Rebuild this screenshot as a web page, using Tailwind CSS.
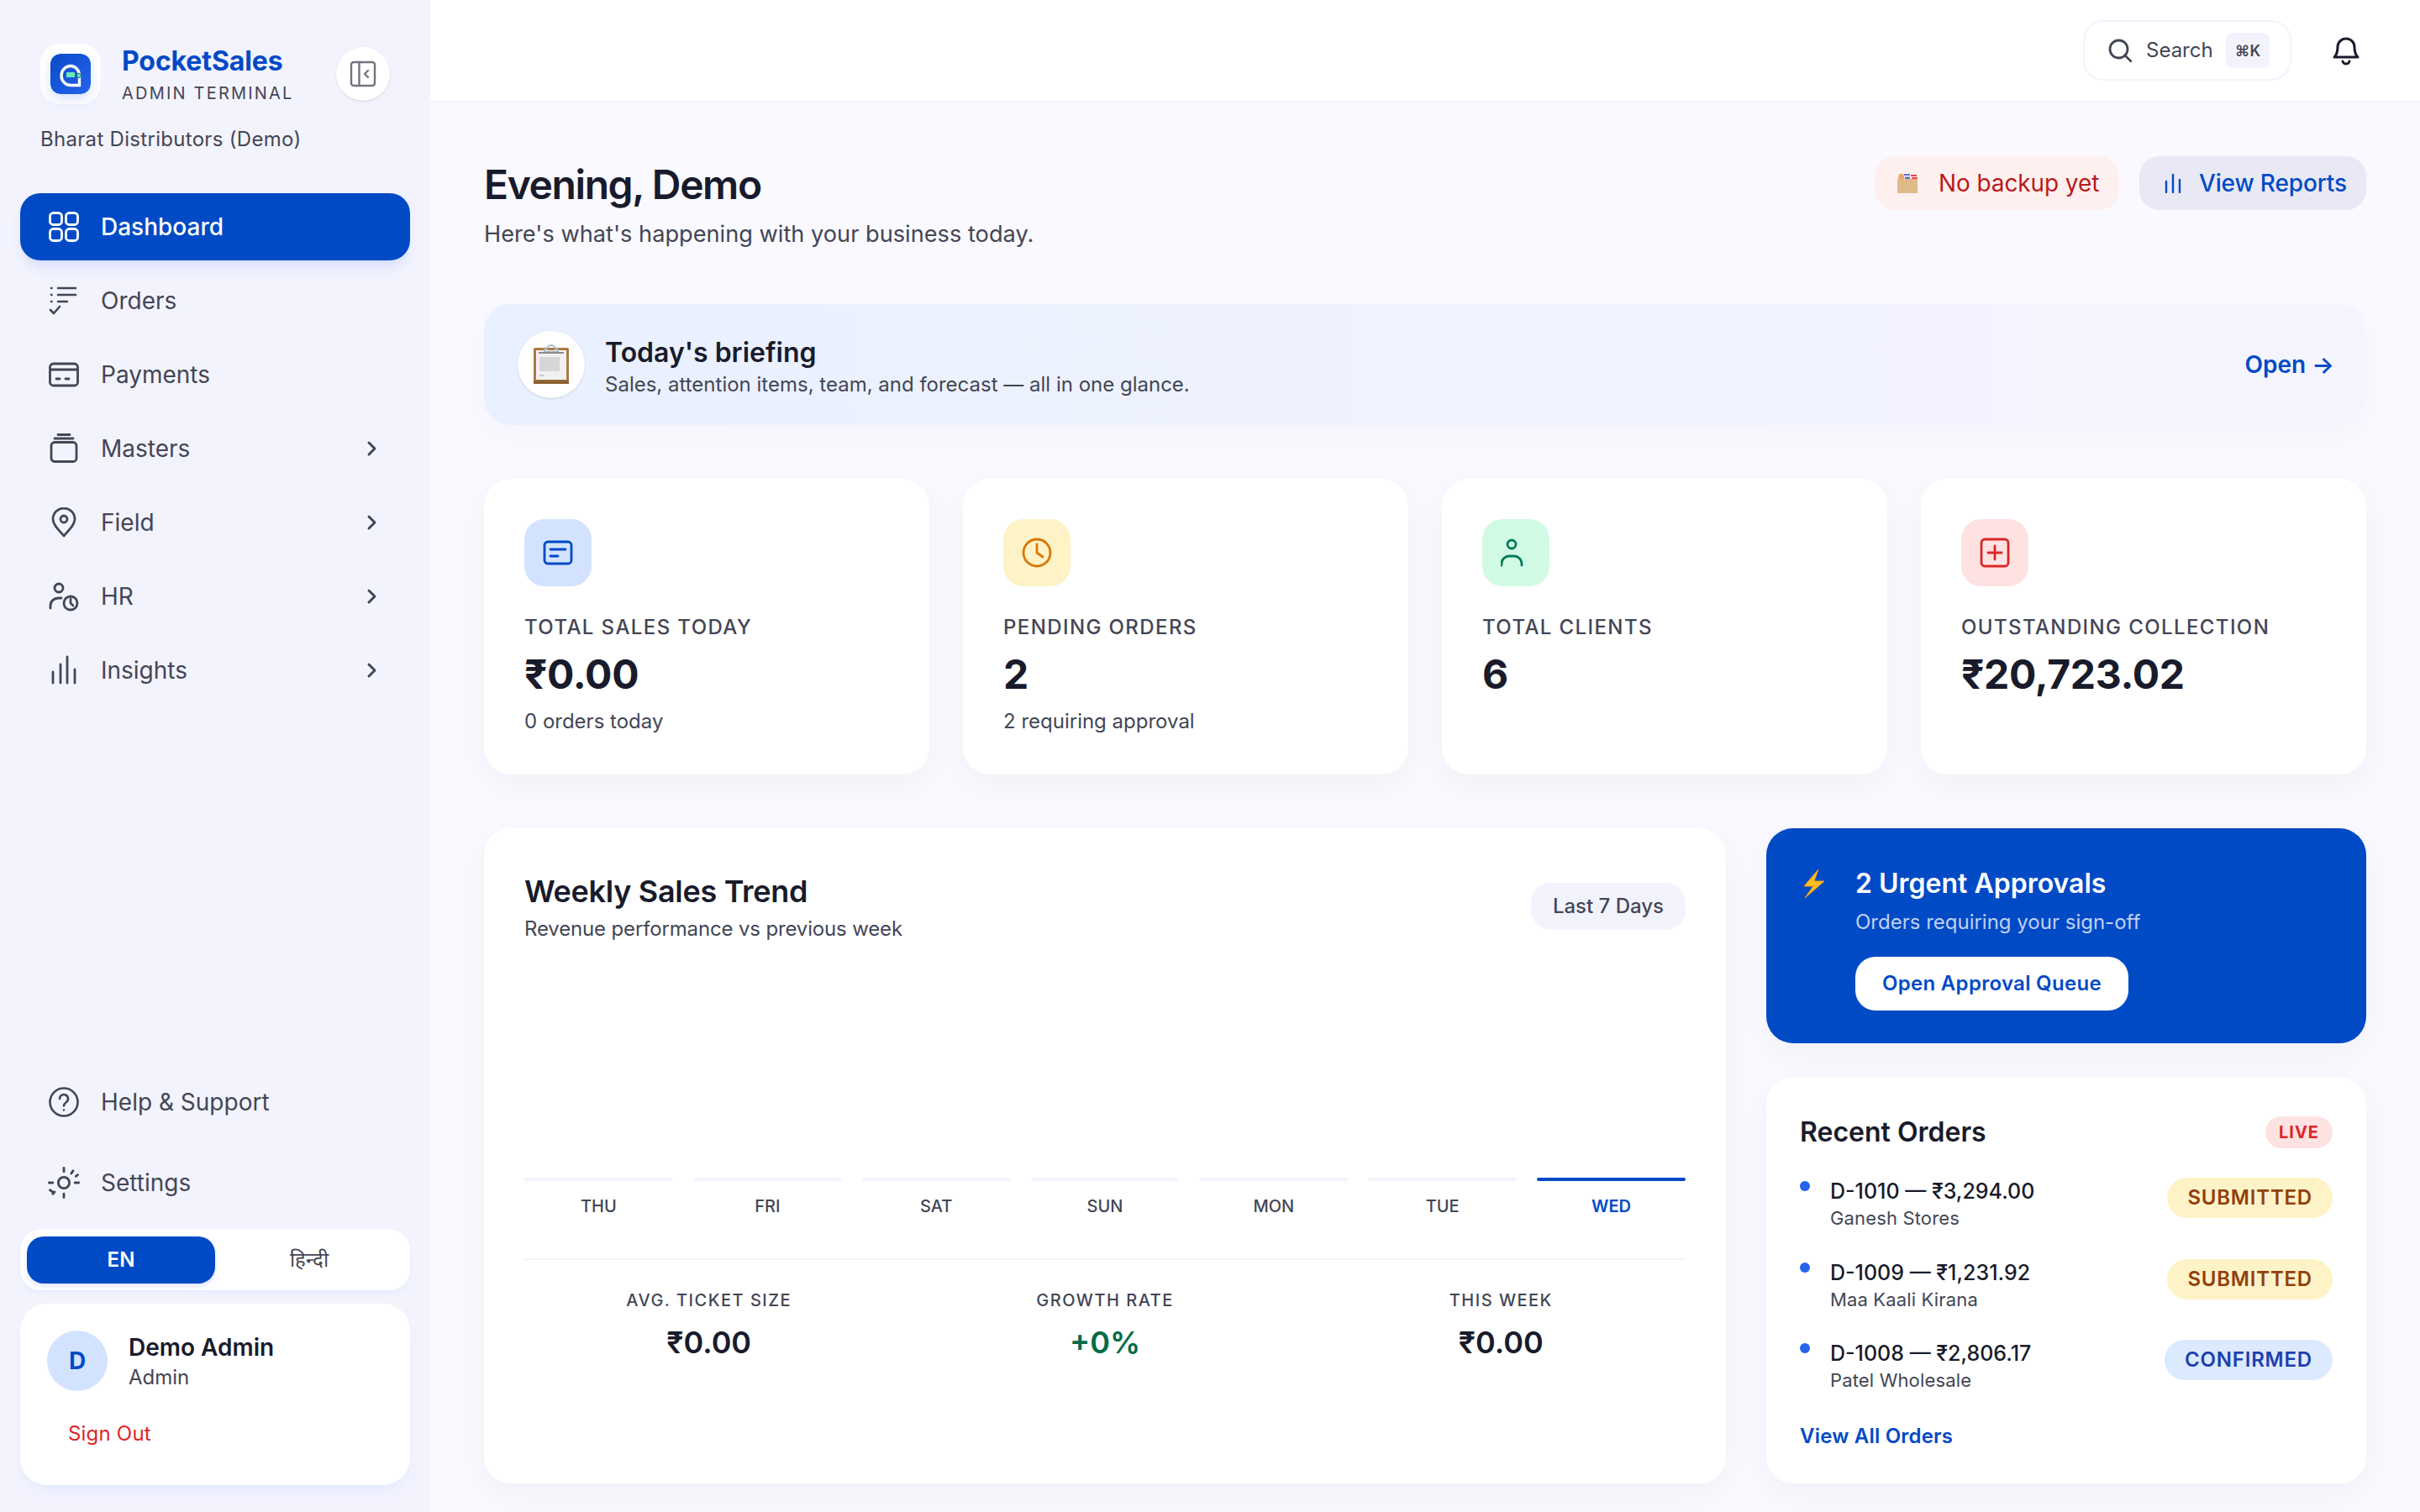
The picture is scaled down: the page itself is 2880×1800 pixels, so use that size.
<!DOCTYPE html>
<html lang="en">
<head>
    <meta charset="UTF-8">
    <meta name="viewport" content="width=device-width, initial-scale=1.0">
    <title>PocketSales</title>
    <script src="https://cdn.jsdelivr.net/npm/@tailwindcss/browser@4"></script>
</head>
<body class="h-screen overflow-hidden flex bg-[#f9f9ff] text-[#191b2b] font-['Inter','Noto_Sans_CJK_SC',sans-serif]">

    <!-- sidebar -->
    <aside class="w-[512px] shrink-0 h-full bg-[#f3f3fe] flex flex-col px-6 pb-8">
        <div class="flex items-center pt-[52px] pl-6 pr-6">
            <div class="w-[72px] h-[72px] rounded-3xl bg-white flex items-center justify-center shrink-0">
                <svg class="w-12 h-12 rounded-xl shadow-[0_6px_14px_rgba(37,99,235,0.18)]" viewBox="0 0 48 48">
                    <defs><linearGradient id="tile" x1="0" y1="0" x2="1" y2="1"><stop offset="0" stop-color="#0a4bc9"/><stop offset="1" stop-color="#2563eb"/></linearGradient></defs>
                    <rect width="48" height="48" rx="12" fill="url(#tile)"/>
                    <path d="M34.500 37.500H24a11 11.500 0 0 1 0-23a10.500 11.500 0 0 1 10.500 11.500z" fill="none" stroke="#fff" stroke-width="3.400"/>
                    <rect x="19" y="22" width="10" height="6" rx="1" fill="#6ee7b7"/>
                    <circle cx="34" cy="26" r="2.600" fill="#6ee7b7" stroke="#0f766e" stroke-width="1"/>
                </svg>
            </div>
            <div class="ml-[25px] flex-1 -my-px">
                <div class="text-[32px] leading-[44px] font-bold tracking-[-0.1px] text-[#004ac6]">PocketSales</div>
                <div class="text-[20px] leading-[28px] tracking-[2.2px] text-[#434655] mt-[2px]">ADMIN TERMINAL</div>
            </div>
            <button class="w-16 h-16 rounded-full bg-white shadow-sm flex items-center justify-center shrink-0">
                <svg class="w-8 h-8" viewBox="0 0 32 32" fill="none" stroke="#71747f" stroke-width="2.400" stroke-linecap="round" stroke-linejoin="round"><rect x="2" y="2" width="28" height="28" rx="3"/><path d="M11.500 2v28M22 12l-4 4 4 4"/></svg>
            </button>
        </div>
        <div class="pl-6 mt-[24px] text-[24px] leading-9 tracking-[0.3px] text-[#434655]">Bharat Distributors (Demo)</div>

        <nav class="mt-[46px] flex flex-col gap-2">
            <a class="h-20 rounded-3xl bg-[#004ac6] shadow-lg shadow-indigo-200/60 flex items-center pl-[34px] pr-[34px] text-white text-[28px] font-medium">
                <svg class="w-9 h-9 mr-[26px]" viewBox="0 0 36 36" fill="none" stroke="currentColor" stroke-width="2.800"><rect x="1.500" y="1.500" width="14" height="14" rx="4"/><rect x="20.500" y="1.500" width="14" height="14" rx="4"/><rect x="1.500" y="20.500" width="14" height="14" rx="4"/><rect x="20.500" y="20.500" width="14" height="14" rx="4"/></svg>
                Dashboard
            </a>
            <a class="h-20 flex items-center pl-[34px] pr-[34px] text-[#434655] text-[28px]">
                <svg class="w-9 h-9 mr-[26px]" viewBox="0 0 36 36" fill="none" stroke="currentColor" stroke-width="2.600" stroke-linecap="round" stroke-linejoin="round"><path d="M11 3h21M11 11h21M11 19h11M3 3h.5M3 11h.5M3 19h.5M2 29l4 4 7-8"/></svg>
                Orders
            </a>
            <a class="h-20 flex items-center pl-[34px] pr-[34px] text-[#434655] text-[28px]">
                <svg class="w-9 h-9 mr-[26px]" viewBox="0 0 36 36" fill="none" stroke="currentColor" stroke-width="2.800" stroke-linecap="round"><rect x="1.500" y="5" width="33" height="26" rx="4"/><path d="M2 12h32M9 23h4M20 23h4"/></svg>
                Payments
            </a>
            <a class="h-20 flex items-center pl-[34px] pr-[34px] text-[#434655] text-[28px]">
                <svg class="w-9 h-9 mr-[26px]" viewBox="0 0 36 36" fill="none" stroke="currentColor" stroke-width="2.800" stroke-linecap="round"><rect x="3" y="10.500" width="30" height="23" rx="4"/><path d="M7 6h22M11 1.500h14"/></svg>
                Masters
                <svg class="w-6 h-6 ml-auto" viewBox="0 0 24 24" fill="none" stroke="currentColor" stroke-width="3" stroke-linecap="round" stroke-linejoin="round"><path d="M9 5l7 7-7 7"/></svg>
            </a>
            <a class="h-20 flex items-center pl-[34px] pr-[34px] text-[#434655] text-[28px]">
                <svg class="w-9 h-9 mr-[26px]" viewBox="0 0 36 36" fill="none" stroke="currentColor" stroke-width="2.800" stroke-linejoin="round"><path d="M18 34C10 25 5 20 5 14a13 13 0 0 1 26 0c0 6-5 11-13 20z"/><circle cx="18" cy="14" r="4"/></svg>
                Field
                <svg class="w-6 h-6 ml-auto" viewBox="0 0 24 24" fill="none" stroke="currentColor" stroke-width="3" stroke-linecap="round" stroke-linejoin="round"><path d="M9 5l7 7-7 7"/></svg>
            </a>
            <a class="h-20 flex items-center pl-[34px] pr-[34px] text-[#434655] text-[28px]">
                <svg class="w-9 h-9 mr-[26px]" viewBox="0 0 36 36" fill="none" stroke="currentColor" stroke-width="2.800" stroke-linecap="round" stroke-linejoin="round"><circle cx="12" cy="8" r="5"/><path d="M2 32v-3c0-5 4-9 10-9h3"/><circle cx="26" cy="26" r="8"/><path d="M26 21v5l3 3"/></svg>
                HR
                <svg class="w-6 h-6 ml-auto" viewBox="0 0 24 24" fill="none" stroke="currentColor" stroke-width="3" stroke-linecap="round" stroke-linejoin="round"><path d="M9 5l7 7-7 7"/></svg>
            </a>
            <a class="h-20 flex items-center pl-[34px] pr-[34px] text-[#434655] text-[28px]">
                <svg class="w-9 h-9 mr-[26px]" viewBox="0 0 36 36" fill="none" stroke="currentColor" stroke-width="2.800" stroke-linecap="round"><path d="M5 20v13M14 11v22M22 2v31M31 17v16"/></svg>
                Insights
                <svg class="w-6 h-6 ml-auto" viewBox="0 0 24 24" fill="none" stroke="currentColor" stroke-width="3" stroke-linecap="round" stroke-linejoin="round"><path d="M9 5l7 7-7 7"/></svg>
            </a>
        </nav>

        <div class="mt-auto flex flex-col">
            <a class="h-20 flex items-center pl-[34px] pr-8 text-[#434655] text-[28px]">
                <svg class="w-9 h-9 mr-[26px]" viewBox="0 0 36 36" fill="none" stroke="currentColor" stroke-width="2.600" stroke-linecap="round"><circle cx="18" cy="18" r="16.500"/><path d="M13 14a5 5 0 1 1 8 4c-2 1.500-3 2.500-3 4.500M18 27.500v.01"/></svg>
                Help &amp; Support
            </a>
            <a class="h-20 mt-4 flex items-center pl-[34px] pr-8 text-[#434655] text-[28px]">
                <svg class="w-9 h-9 mr-[26px] scale-110" viewBox="0 0 36 36" fill="none" stroke="currentColor" stroke-width="2.600" stroke-linecap="round"><circle cx="18" cy="18" r="6"/><path d="M18 2v4M18 30v4M2 18h4M30 18h4M26 8l2-3M31 11l2-1.500M8 28l-2 2M3 26l3 2"/></svg>
                Settings
            </a>
            <div class="mt-4 h-[72px] rounded-3xl bg-white shadow-md shadow-indigo-100/60 p-2 grid grid-cols-2">
                <button class="rounded-[20px] bg-[#004ac6] text-white text-[24px] font-semibold shadow-md shadow-indigo-100">EN</button>
                <button class="text-[#434655] text-[24px]">हिन्दी</button>
            </div>
            <div class="mt-4 h-[216px] rounded-[32px] bg-white shadow-lg shadow-indigo-100/60 px-8 pt-8">
                <div class="flex items-center">
                    <div class="w-[72px] h-[72px] rounded-full bg-[#d3e3ff] flex items-center justify-center text-[#004ac6] text-[28px] font-bold">D</div>
                    <div class="ml-[25px]">
                        <div class="text-[28px] leading-10 font-semibold">Demo Admin</div>
                        <div class="text-[24px] leading-8 text-[#434655]">Admin</div>
                    </div>
                </div>
                <div class="mt-[33px] ml-[25px] text-[24px] leading-9 tracking-[0.2px] text-[#dc2626]">Sign Out</div>
            </div>
        </div>
    </aside>

    <div class="flex-1 min-w-0 flex flex-col">
        <!-- top bar -->
        <header class="h-[122px] shrink-0 bg-white border-b-2 border-[#f3f3fe] flex items-center justify-end pr-[72px]">
            <div class="h-[72px] w-[248px] rounded-3xl border-2 border-[#f3f3fe] flex items-center pl-7 pr-6">
                <svg class="w-7 h-7 text-[#434655]" viewBox="0 0 28 28" fill="none" stroke="currentColor" stroke-width="2.800" stroke-linecap="round"><circle cx="12.500" cy="12.500" r="10.500"/><path d="M20 20l7 7"/></svg>
                <span class="ml-[17px] text-[24px] text-[#434655]">Search</span>
                <span class="ml-auto w-[52px] h-[42px] rounded-lg bg-[#f3f3fe] flex items-center justify-center text-[18px] font-semibold text-[#434655]">⌘K</span>
            </div>
            <svg class="w-8 h-10 ml-[49px]" viewBox="0 0 32 40" fill="none" stroke="#191b2b" stroke-width="3" stroke-linecap="round" stroke-linejoin="round"><path d="M2 28c3-3 4-6 4-12a10 10 0 0 1 20 0c0 6 1 9 4 12z"/><path d="M12 33c1 4 7 4 8 0"/></svg>
        </header>

        <!-- content -->
        <main class="flex-1 min-h-0 px-16 pt-[66px]">
            <div class="flex items-start justify-between">
                <div>
                    <h1 class="text-[48px] leading-[64px] font-semibold tracking-[-1.4px]">Evening, Demo</h1>
                    <p class="text-[27.2px] leading-10 mt-[7px] text-[#434655]">Here's what's happening with your business today.</p>
                </div>
                <div class="flex gap-6 items-center -mt-[2px]">
                    <div class="h-16 w-[291px] rounded-3xl bg-[#fff0f0] flex items-center pl-[26px] text-[#ba1a1a] text-[28px]">
                        <svg class="w-[26px] h-6" viewBox="0 0 26 24"><path d="M1 7h24v16a1 1 0 0 1-1 1H2a1 1 0 0 1-1-1z" fill="#e0bb8a"/><path d="M3 1h5l1 3 0 3H2z" fill="#e9a86a"/><rect x="9" y="1" width="7" height="2" fill="#5a6ee0"/><rect x="10" y="4.500" width="6" height="2.500" fill="#5a6ee0"/><rect x="17" y="2" width="7" height="2" fill="#e8484a"/><rect x="18" y="5" width="7" height="2" fill="#e8484a"/></svg>
                        <span class="ml-[24px] tracking-[-0.1px]">No backup yet</span>
                    </div>
                    <div class="h-16 w-[270px] rounded-3xl bg-[#e8e9f5] flex items-center pl-[30px] text-[#004ac6] text-[28px] font-medium tracking-[-0.15px]">
                        <svg class="w-5 h-6 mr-[21px]" viewBox="0 0 20 24" fill="none" stroke="currentColor" stroke-width="2.400" stroke-linecap="round"><path d="M2 10v13M10 2v21M18 8v15"/></svg>
                        View Reports
                    </div>
                </div>
            </div>

            <!-- briefing -->
            <div class="mt-[63px] h-[144px] rounded-[32px] bg-linear-to-r from-[#e9f0ff] to-[#f6f5ff] shadow-[0_12px_40px_rgba(25,27,43,0.025)] flex items-center pl-10 pr-[38px]">
                <div class="w-20 h-20 rounded-full bg-white shadow-sm flex items-center justify-center shrink-0">
                    <svg class="w-[42px] h-[48px]" viewBox="0 0 42 48">
                        <rect x="0" y="4" width="42" height="43" rx="2" fill="#a97b42"/>
                        <rect x="0" y="43" width="42" height="4" fill="#8a6233"/>
                        <rect x="3" y="7" width="36" height="35" fill="#f1f1f1"/>
                        <path d="M16 6a5 5 0 0 1 10 0h3v3H13V6z" fill="none" stroke="#aeb6c4" stroke-width="2"/>
                        <rect x="6" y="9" width="30" height="2" fill="#8b8b8b"/>
                        <rect x="7" y="15" width="24" height="17" fill="#d6d6d6"/>
                        <rect x="7" y="36" width="6" height="2" fill="#c9c9c9"/>
                    </svg>
                </div>
                <div class="ml-6 pt-[6px]">
                    <div class="text-[32px] leading-10 font-semibold">Today's briefing</div>
                    <div class="text-[24px] leading-8 text-[#434655] mt-[2px]">Sales, attention items, team, and forecast — all in one glance.</div>
                </div>
                <div class="ml-auto text-[#004ac6] text-[28px] font-semibold">Open →</div>
            </div>

            <!-- stat cards -->
            <div class="mt-16 grid grid-cols-4 gap-10">
                <div class="h-[352px] rounded-[32px] bg-white shadow-[0_12px_40px_rgba(25,27,43,0.04)] p-12">
                    <div class="w-20 h-20 rounded-3xl bg-[#d3e3ff] flex items-center justify-center">
                        <svg class="w-9 h-9" viewBox="0 0 36 36" fill="none" stroke="#004ac6" stroke-width="2.800" stroke-linecap="round"><rect x="2" y="5" width="32" height="26" rx="4"/><path d="M9 14h18M9 22h9"/></svg>
                    </div>
                    <div class="mt-[33px] text-[24px] leading-8 font-medium tracking-[1.4px] text-[#434655]">TOTAL SALES TODAY</div>
                    <div class="mt-[8px] text-[48px] leading-[64px] font-bold tracking-[-0.3px]">₹0.00</div>
                    <div class="mt-[8px] text-[24px] leading-8 text-[#434655]">0 orders today</div>
                </div>
                <div class="h-[352px] rounded-[32px] bg-white shadow-[0_12px_40px_rgba(25,27,43,0.04)] p-12">
                    <div class="w-20 h-20 rounded-3xl bg-[#fef3c7] flex items-center justify-center">
                        <svg class="w-9 h-9" viewBox="0 0 36 36" fill="none" stroke="#d97706" stroke-width="2.800" stroke-linecap="round" stroke-linejoin="round"><circle cx="18" cy="18" r="16"/><path d="M18 8v10l7 5"/></svg>
                    </div>
                    <div class="mt-[33px] text-[24px] leading-8 font-medium tracking-[1.4px] text-[#434655]">PENDING ORDERS</div>
                    <div class="mt-[8px] text-[48px] leading-[64px] font-bold tracking-[-0.3px]">2</div>
                    <div class="mt-[8px] text-[24px] leading-8 text-[#434655]">2 requiring approval</div>
                </div>
                <div class="h-[352px] rounded-[32px] bg-white shadow-[0_12px_40px_rgba(25,27,43,0.04)] p-12">
                    <div class="w-20 h-20 rounded-3xl bg-[#d1fae5] flex items-center justify-center">
                        <svg class="w-9 h-9" viewBox="0 0 36 36" fill="none" stroke="#047857" stroke-width="2.800" stroke-linecap="round"><circle cx="13" cy="8" r="5"/><path d="M1 33v-2a9 9 0 0 1 9-9h6a9 9 0 0 1 9 9v2"/></svg>
                    </div>
                    <div class="mt-[33px] text-[24px] leading-8 font-medium tracking-[1.4px] text-[#434655]">TOTAL CLIENTS</div>
                    <div class="mt-[8px] text-[48px] leading-[64px] font-bold tracking-[-0.3px]">6</div>
                </div>
                <div class="h-[352px] rounded-[32px] bg-white shadow-[0_12px_40px_rgba(25,27,43,0.04)] p-12">
                    <div class="w-20 h-20 rounded-3xl bg-[#fee2e2] flex items-center justify-center">
                        <svg class="w-9 h-9" viewBox="0 0 36 36" fill="none" stroke="#dc2626" stroke-width="2.800" stroke-linecap="round"><rect x="2" y="2" width="32" height="32" rx="4"/><path d="M18 10v16M10 18h16"/></svg>
                    </div>
                    <div class="mt-[33px] text-[24px] leading-8 font-medium tracking-[1.4px] text-[#434655]">OUTSTANDING COLLECTION</div>
                    <div class="mt-[8px] text-[48px] leading-[64px] font-bold tracking-[-0.3px]">₹20,723.02</div>
                </div>
            </div>

            <div class="mt-16 flex gap-12">
                <!-- weekly trend -->
                <section class="flex-1 h-[780px] rounded-[32px] bg-white shadow-[0_12px_40px_rgba(25,27,43,0.04)] p-12">
                    <div class="flex items-start justify-between">
                        <div class="pt-[3px]">
                            <h2 class="text-[36px] leading-[48px] font-semibold tracking-[-0.3px]">Weekly Sales Trend</h2>
                            <p class="text-[24px] leading-8 tracking-[-0.15px] text-[#434655] mt-[5px]">Revenue performance vs previous week</p>
                        </div>
                        <div class="mt-[17px] h-14 px-[26px] rounded-3xl bg-[#f3f3fe] flex items-center text-[24px] font-medium text-[#434655]">Last 7 Days</div>
                    </div>
                    <div class="mt-[280px] grid grid-cols-7 gap-6">
                        <div class="text-center text-[20px] font-medium text-[#434655]"><div class="h-1 rounded-full bg-[#f3f3fe] mb-[15px]"></div>THU</div>
                        <div class="text-center text-[20px] font-medium text-[#434655]"><div class="h-1 rounded-full bg-[#f3f3fe] mb-[15px]"></div>FRI</div>
                        <div class="text-center text-[20px] font-medium text-[#434655]"><div class="h-1 rounded-full bg-[#f3f3fe] mb-[15px]"></div>SAT</div>
                        <div class="text-center text-[20px] font-medium text-[#434655]"><div class="h-1 rounded-full bg-[#f3f3fe] mb-[15px]"></div>SUN</div>
                        <div class="text-center text-[20px] font-medium text-[#434655]"><div class="h-1 rounded-full bg-[#f3f3fe] mb-[15px]"></div>MON</div>
                        <div class="text-center text-[20px] font-medium text-[#434655]"><div class="h-1 rounded-full bg-[#f3f3fe] mb-[15px]"></div>TUE</div>
                        <div class="text-center text-[20px] font-semibold text-[#004ac6]"><div class="h-1 rounded-full bg-[#004ac6] mb-[15px]"></div>WED</div>
                    </div>
                    <div class="mt-[47px] border-t-2 border-[#f3f3fe] pt-[34px] grid grid-cols-3 gap-8 text-center">
                        <div><div class="text-[20px] leading-7 font-medium tracking-[1.500px] text-[#434655]">AVG. TICKET SIZE</div><div class="mt-[8px] text-[36px] leading-[56px] font-semibold">₹0.00</div></div>
                        <div><div class="text-[20px] leading-7 font-medium tracking-[1.500px] text-[#434655]">GROWTH RATE</div><div class="mt-[8px] text-[36px] leading-[56px] font-semibold text-[#006c49]">+0%</div></div>
                        <div><div class="text-[20px] leading-7 font-medium tracking-[1.500px] text-[#434655]">THIS WEEK</div><div class="mt-[8px] text-[36px] leading-[56px] font-semibold">₹0.00</div></div>
                    </div>
                </section>

                <!-- right column -->
                <div class="w-[714px] shrink-0 flex flex-col gap-10">
                    <section class="h-[256px] rounded-[32px] bg-[#004ac6] shadow-[0_12px_40px_rgba(25,27,43,0.04)] flex pl-10 pt-[46px]">
                        <svg class="w-[28px] h-[36px] mt-[2px] ml-[3px] shrink-0" viewBox="0 0 28 36"><path d="M19 1L2 21h11L3 35l23-20H14z" fill="#fbbf24" stroke="#f59e0b" stroke-width="1"/></svg>
                        <div class="ml-[35px]">
                            <div class="text-[32px] leading-10 font-semibold text-white">2 Urgent Approvals</div>
                            <div class="mt-[10px] text-[24px] leading-8 text-white/75">Orders requiring your sign-off</div>
                            <button class="mt-[25px] h-16 px-8 rounded-3xl bg-white text-[#004ac6] text-[24px] font-semibold tracking-[0.3px]">Open Approval Queue</button>
                        </div>
                    </section>
                    <section class="flex-1 rounded-[32px] bg-white shadow-[0_12px_40px_rgba(25,27,43,0.04)] px-10 pt-[46px]">
                        <div class="flex items-center justify-between">
                            <h2 class="text-[32px] leading-10 font-semibold">Recent Orders</h2>
                            <span class="h-[38px] px-4 rounded-full bg-[#fee2e2] flex items-center text-[20px] font-bold tracking-[1px] text-[#dc2626]">LIVE</span>
                        </div>
                        <div class="mt-[34px] flex flex-col">
                            <div class="h-[97px] flex items-start">
                                <div class="w-3 h-3 mt-[4px] rounded-full bg-[#2563eb] shrink-0"></div>
                                <div class="ml-6"><div class="text-[25px] leading-8 font-medium">D-1010 — ₹3,294.00</div><div class="text-[22px] leading-8 tracking-[0.15px] text-[#434655]">Ganesh Stores</div></div>
                                <span class="ml-auto h-12 px-6 rounded-full bg-[#fef3c7] flex items-center text-[24px] font-semibold tracking-[0.8px] text-[#92400e]">SUBMITTED</span>
                            </div>
                            <div class="h-[96px] flex items-start">
                                <div class="w-3 h-3 mt-[4px] rounded-full bg-[#2563eb] shrink-0"></div>
                                <div class="ml-6"><div class="text-[25px] leading-8 font-medium">D-1009 — ₹1,231.92</div><div class="text-[22px] leading-8 tracking-[0.15px] text-[#434655]">Maa Kaali Kirana</div></div>
                                <span class="ml-auto h-12 px-6 rounded-full bg-[#fef3c7] flex items-center text-[24px] font-semibold tracking-[0.8px] text-[#92400e]">SUBMITTED</span>
                            </div>
                            <div class="h-[96px] flex items-start">
                                <div class="w-3 h-3 mt-[4px] rounded-full bg-[#2563eb] shrink-0"></div>
                                <div class="ml-6"><div class="text-[25px] leading-8 font-medium">D-1008 — ₹2,806.17</div><div class="text-[22px] leading-8 tracking-[0.15px] text-[#434655]">Patel Wholesale</div></div>
                                <span class="ml-auto h-12 px-6 rounded-full bg-[#dbeafe] flex items-center text-[24px] font-semibold tracking-[0.8px] text-[#1e40af]">CONFIRMED</span>
                            </div>
                        </div>
                        <a class="block mt-[3px] text-[24px] leading-8 font-semibold tracking-[0.2px] text-[#004ac6]">View All Orders</a>
                    </section>
                </div>
            </div>
        </main>
    </div>
</body>
</html>
